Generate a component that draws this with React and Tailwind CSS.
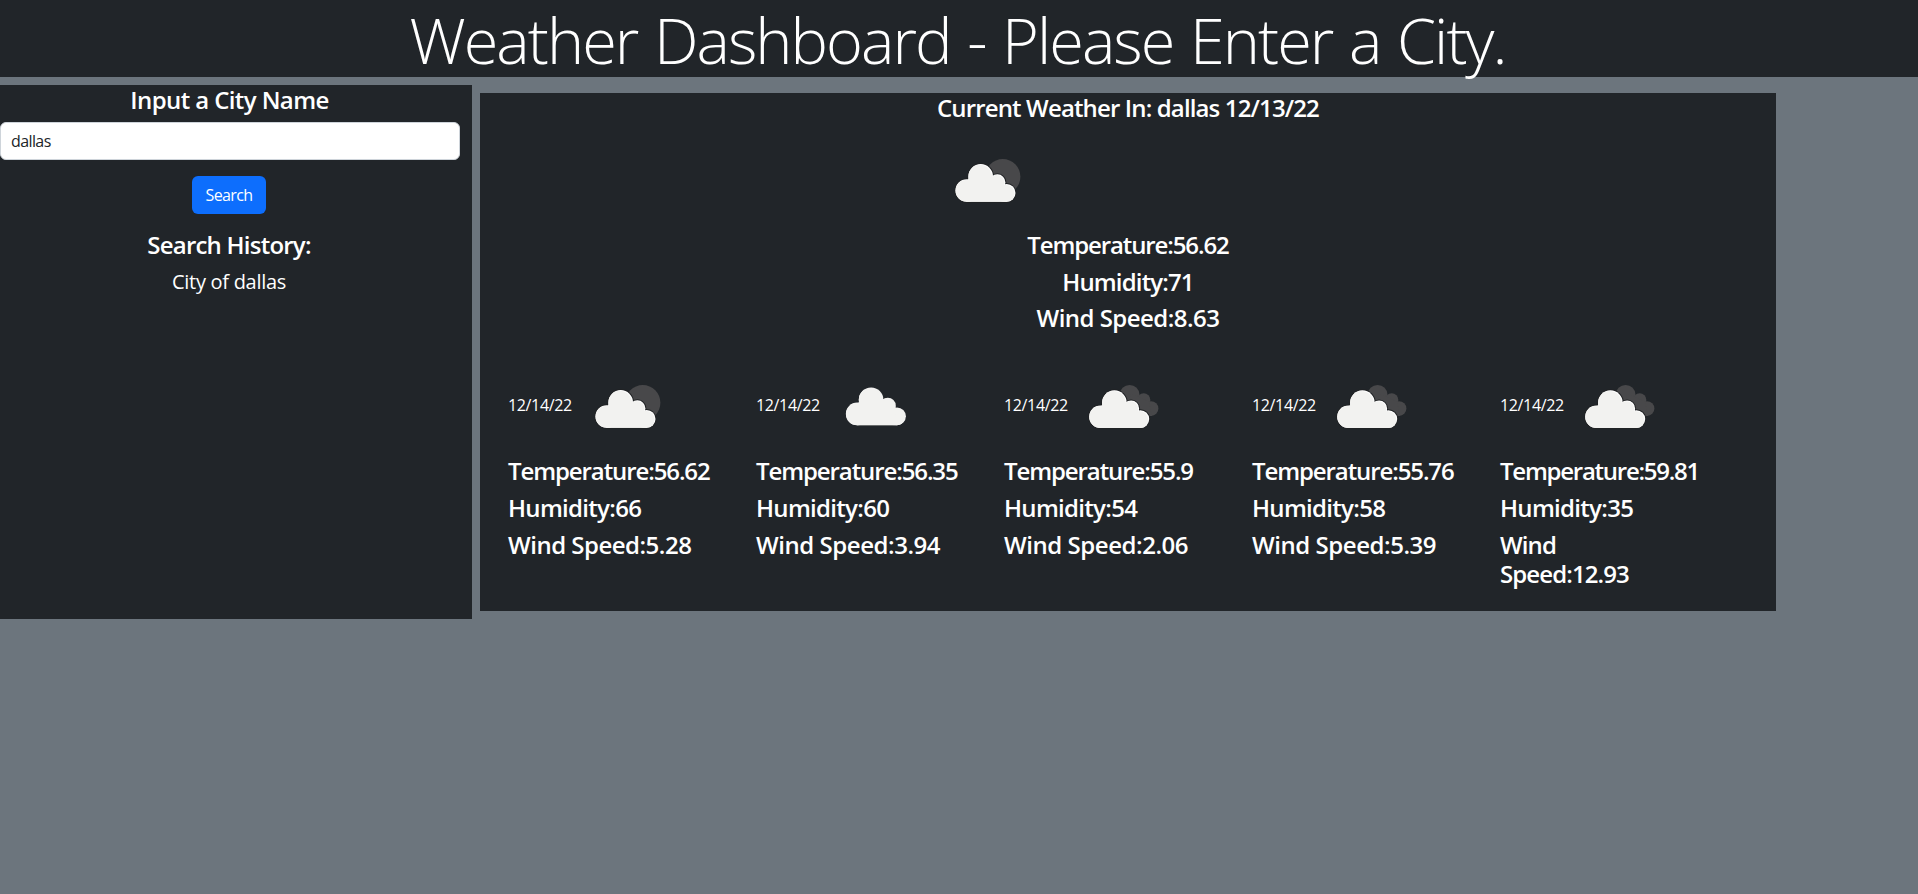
import { useId } from "react";

const forecast = [
  { icon: "partly", temp: "56.62", tempTracking: "tracking-[-1.1px]", humidity: "66", wind: "5.28", windTracking: "tracking-[-0.5px]" },
  { icon: "cloud", temp: "56.35", tempTracking: "tracking-[-1.1px]", humidity: "60", wind: "3.94", windTracking: "tracking-[-0.45px]" },
  { icon: "clouds", temp: "55.9", tempTracking: "tracking-[-1.1px]", humidity: "54", wind: "2.06", windTracking: "tracking-[-0.45px]" },
  { icon: "clouds", temp: "55.76", tempTracking: "tracking-[-1.1px]", humidity: "58", wind: "5.39", windTracking: "tracking-[-0.45px]" },
  { icon: "clouds", temp: "59.81", tempTracking: "tracking-[-1.25px]", humidity: "35", wind: "12.93", windTracking: "tracking-[-0.9px]" },
];

function CloudShapes(props) {
  return (
    <g {...props}>
      <circle cx="42.7" cy="46.4" r="12.3" />
      <circle cx="28.8" cy="60.5" r="11.3" />
      <circle cx="59.4" cy="52.3" r="8" />
      <circle cx="68.6" cy="62.9" r="8.9" />
      <path d="M31 47 L43 41 L55 48 L67 53 L69 71.8 H28.8 Z" />
    </g>
  );
}

function WeatherIcon({ type }) {
  const clip = useId();
  const offset = { partly: "translate(0 0)", cloud: "translate(2.4 -2.6)", clouds: "translate(-2.3 0.2)" }[type];
  return (
    <svg viewBox="0 0 100 100" className="size-[100px] shrink-0" aria-hidden="true">
      {type === "partly" && <circle cx="64.8" cy="46.7" r="17.6" fill="#48484a" />}
      {type === "clouds" && (
        <g fill="#48484a">
          <circle cx="55.6" cy="38.8" r="9.9" />
          <circle cx="69.7" cy="43.9" r="6.7" />
          <circle cx="77" cy="52.6" r="7.4" />
          <path d="M56 38 L65 41 L75 45.5 L78 60 H60 Z" />
        </g>
      )}
      <clipPath id={clip}>
        <circle cx="42.7" cy="46.4" r="12.3" />
        <circle cx="28.8" cy="60.5" r="11.3" />
        <circle cx="59.4" cy="52.3" r="8" />
        <circle cx="68.6" cy="62.9" r="8.9" />
        <path d="M31 47 L43 41 L55 48 L67 53 L69 71.8 H28.8 Z" />
      </clipPath>
      <g transform={offset}>
        {type !== "cloud" && <CloudShapes fill="#212325" stroke="#212325" strokeWidth="2" />}
        <CloudShapes fill={type === "cloud" ? "#f2f2f0" : "#ffffff"} />
        <g clipPath={`url(#${clip})`}>
          <CloudShapes fill="#f2f2f0" transform="translate(-0.9 0.7)" />
        </g>
      </g>
    </svg>
  );
}

function Heading({ className = "", children }) {
  return <h4 className={`mb-[7px] pt-px text-2xl leading-[28.8px] font-semibold ${className}`}>{children}</h4>;
}

export default function App() {
  return (
    <div className="min-h-screen bg-[#6c757d] font-['Open_Sans','Noto_Sans',sans-serif] text-base text-white">
      <header className="h-[77px] bg-[#212529]">
        <h1 className="pt-px pr-[3px] text-center text-[63px] leading-[77px] font-light tracking-[-1.95px] [word-spacing:2.15px]">
          Weather Dashboard - Please Enter a City.
        </h1>
      </header>
      <main className="mt-2 flex">
        <aside className="w-[472px] shrink-0 bg-[#212529] pr-3">
          <div className="flex flex-col items-center">
            <Heading className="pr-px tracking-[-0.6px]">Input a City Name</Heading>
            <input
              type="text"
              defaultValue="dallas"
              className="h-[38px] w-full rounded-md border border-[#ced4da] bg-white px-2.5 tracking-[-0.6px] text-[#212529] outline-none"
            />
            <button className="mt-4 mr-0.5 mb-4 h-[38px] w-[74px] rounded-md bg-[#0d6efd] tracking-[-0.6px]">
              Search
            </button>
            <Heading className="pr-0.5 tracking-[-0.77px]">Search History:</Heading>
            <p className="pr-0.5 text-xl leading-[30px] tracking-[-0.29px]">City of dallas</p>
          </div>
        </aside>
        <section className="m-2 w-[1296px] shrink-0 bg-[#212529]">
          <div className="flex flex-col items-center">
            <Heading className="tracking-[-0.86px]">Current Weather In: dallas 12/13/22</Heading>
            <div className="mr-[281px]">
              <WeatherIcon type="partly" />
            </div>
            <Heading className="tracking-[-1.12px]">Temperature:56.62</Heading>
            <Heading className="tracking-[-0.85px]">Humidity:71</Heading>
            <Heading className="tracking-[-0.53px]">Wind Speed:8.63</Heading>
          </div>
          <div className="flex py-4 pl-7">
            {forecast.map((day, i) => (
              <div key={i} className="w-[248px]">
                <div className="flex items-center">
                  <span className="w-[69.5px] pb-[3px] tracking-[-0.35px]">12/14/22</span>
                  <WeatherIcon type={day.icon} />
                </div>
                <div className="w-[189px]">
                  <Heading className={day.tempTracking}>Temperature:{day.temp}</Heading>
                  <Heading className="tracking-[-0.7px]">Humidity:{day.humidity}</Heading>
                  <Heading className={day.windTracking}>Wind Speed:{day.wind}</Heading>
                </div>
              </div>
            ))}
          </div>
        </section>
      </main>
    </div>
  );
}
